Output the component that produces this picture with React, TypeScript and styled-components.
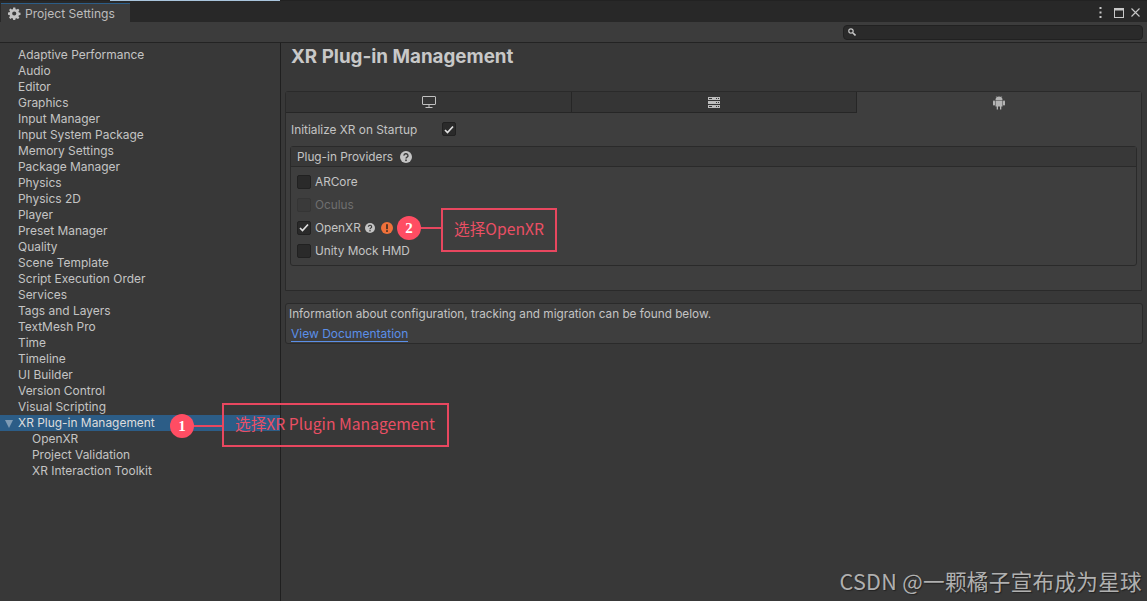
import styled, { createGlobalStyle } from "styled-components"

const Global = createGlobalStyle`
    html, body { margin: 0; padding: 0; background: #383838; }
    body { font-family: Inter, "Noto Sans", sans-serif; font-size: 11.8px; color: #c4c4c4; }
`

const Window = styled.div`
    position: relative;
    width: 1147px;
    height: 601px;
    overflow: hidden;
    display: flex;
    flex-direction: column;
    background: #383838;
`

const TopStrip = styled.div`
    height: 1px;
    flex: none;
    padding-left: 110px;
    background: #222222;
`
const StripSegment = styled.div`
    width: 170px;
    height: 1px;
    background: #a9c4dc;
`
const TitleBar = styled.div`
    height: 21px;
    box-sizing: border-box;
    padding-top: 2px;
    padding-left: 1px;
    background: #282828;
    display: flex;
    align-items: stretch;
    justify-content: space-between;
    flex: none;
`
const Tab = styled.div`
    width: 129px;
    box-sizing: border-box;
    background: #3c3c3c;
    border-top: 1px solid #2c5d87;
    display: flex;
    align-items: center;
    gap: 4px;
    padding-left: 7px;
    font-size: 12.1px;
    color: #bdbdbd;
`
const WindowButtons = styled.div`
    display: flex;
    align-items: center;
    gap: 7px;
    padding-right: 7px;
    color: #c8c8c8;
`
const Toolbar = styled.div`
    height: 21px;
    box-sizing: border-box;
    background: #3c3c3c;
    border-bottom: 1px solid #232323;
    display: flex;
    justify-content: flex-end;
    align-items: center;
    padding-right: 4px;
    flex: none;
`
const Search = styled.div`
    width: 300px;
    height: 15px;
    border-radius: 4px;
    background: #2a2a2a;
    border: 1px solid #212121;
    display: flex;
    align-items: center;
    padding-left: 4px;
    box-sizing: border-box;
`
const Body = styled.div`
    flex: 1;
    display: flex;
    min-height: 0;
`
const Sidebar = styled.div`
    width: 281px;
    box-sizing: border-box;
    border-right: 1px solid #1f1f1f;
    padding-top: 4px;
    flex: none;
    font-size: 11.95px;
`
const Item = styled.div<{ $child?: boolean; $selected?: boolean }>`
    position: relative;
    height: 16px;
    line-height: 16px;
    padding-left: ${(p) => (p.$child ? 32 : 18)}px;
    background: ${(p) => (p.$selected ? "#2c5d87" : "transparent")};
    color: ${(p) => (p.$selected ? "#dcdcdc" : "#c4c4c4")};
    white-space: nowrap;
`
const Arrow = styled.span`
    position: absolute;
    left: 5px;
    top: 5px;
    width: 0;
    height: 0;
    border-left: 4.5px solid transparent;
    border-right: 4.5px solid transparent;
    border-top: 8px solid #7f9cb5;
`
const Main = styled.div`
    flex: 1;
    padding: 0 4px 0 4px;
    min-width: 0;
`
const Heading = styled.h1`
    margin: 0;
    padding-left: 6px;
    height: 48px;
    line-height: 27px;
    font-size: 18.8px;
    font-weight: 700;
    color: #c8c8c8;
`
const TabPanel = styled.div`
    width: 857px;
    height: 200px;
    box-sizing: border-box;
    background: #3e3e3e;
    border: 1px solid #2a2a2a;
    border-radius: 3px 3px 0 0;
`
const TabRow = styled.div`
    display: grid;
    grid-template-columns: 286px 285px 1fr;
    height: 21px;
`
const PlatformTab = styled.div<{ $active?: boolean }>`
    display: flex;
    align-items: center;
    justify-content: center;
    background: ${(p) => (p.$active ? "#3e3e3e" : "#353535")};
    border-bottom: ${(p) => (p.$active ? "none" : "1px solid #262626")};
    border-right: ${(p) => (p.$active ? "none" : "1px solid #262626")};
    color: #bdbdbd;
`
const InitRow = styled.div`
    display: flex;
    align-items: center;
    height: 32px;
    padding-left: 5px;
`
const InitLabel = styled.span`
    width: 151px;
    padding-top: 1px;
    font-size: 11.85px;
`
const Check = styled.span<{ $disabled?: boolean }>`
    width: 14px;
    height: 14px;
    box-sizing: border-box;
    flex: none;
    border-radius: 2px;
    background: ${(p) => (p.$disabled ? "#3a3a3a" : "#2a2a2a")};
    border: 1px solid ${(p) => (p.$disabled ? "#353535" : "#212121")};
    display: inline-flex;
    align-items: center;
    justify-content: center;
    color: #e0e0e0;
`
const Providers = styled.div`
    margin: 1px 4px 0 4px;
    height: 120px;
    box-sizing: border-box;
    border: 1px solid #2a2a2a;
    border-radius: 3px;
`
const ProvidersHeader = styled.div`
    height: 20px;
    box-sizing: border-box;
    background: #383838;
    border-bottom: 1px solid #2a2a2a;
    display: flex;
    align-items: center;
    gap: 7px;
    padding-left: 6px;
`
const ProvidersBody = styled.div`
    padding: 3px 6px 0;
    display: flex;
    flex-direction: column;
`
const ProviderRow = styled.div<{ $disabled?: boolean }>`
    height: 23px;
    display: flex;
    align-items: center;
    gap: 4px;
    color: ${(p) => (p.$disabled ? "#6f6f6f" : "#c4c4c4")};
`
const InfoBox = styled.div`
    margin-top: 12px;
    width: 858px;
    height: 41px;
    box-sizing: border-box;
    background: #3e3e3e;
    border: 1px solid #2a2a2a;
    border-radius: 3px;
    padding: 1px 3px 0;
    line-height: 18px;
    font-size: 11.75px;
`
const DocLink = styled.a`
    display: inline-block;
    margin: 4px 0 0 2px;
    color: #5b8fe8;
    font-size: 12px;
    line-height: 14px;
    border-bottom: 1px solid #5b8fe8;
`
const Badge = styled.span`
    position: absolute;
    width: 24px;
    height: 24px;
    border-radius: 50%;
    background: #ff4d63;
    color: #fff;
    font-family: "Liberation Serif", serif;
    font-weight: 700;
    font-size: 15px;
    line-height: 24px;
    text-align: center;
`
const Leader = styled.span`
    position: absolute;
    height: 2px;
    background: #e8475f;
`
const Callout = styled.div`
    position: absolute;
    box-sizing: border-box;
    border: 2px solid #e8475f;
    color: #ea4f64;
    font-family: "Noto Sans CJK SC", sans-serif;
    font-size: 15.7px;
    display: flex;
    align-items: center;
    padding: 0 0 3px 11px;
    white-space: nowrap;
`
const Watermark = styled.div`
    position: absolute;
    right: 5px;
    top: 566px;
    font-family: "Noto Sans CJK SC", sans-serif;
    font-size: 21.6px;
    letter-spacing: 0.3px;
    line-height: 30px;
    color: #b0b0b0;
    text-shadow: 1px 1px 1px #222;
    white-space: nowrap;
`

const Gear = () => (
    <svg width="13" height="13" viewBox="0 0 24 24" fill="#c4c4c4">
        <path fillRule="evenodd" d="M10 1h4l.6 3.2 2 .8L19.3 3.200 22 6l-1.900 2.700.9 2 3 .5v4l-3.100.6-.8 2 1.800 2.700-2.800 2.800-2.700-1.800-2 .8L14 25h-4l-.6-3.100-2-.8-2.700 1.800L2 20l1.800-2.700-.8-2L0 14.700v-4l3-.5.9-2L2 5.600 4.700 3l2.700 1.900 2-.8zM12 8.500a4 4 0 1 0 0 8 4 4 0 0 0 0-8z" transform="scale(.96)" />
    </svg>
)
const Dots = () => (
    <svg width="8" height="11" viewBox="0 0 8 11" fill="currentColor">
        <rect x="0.500" y="0" width="2" height="2" />
        <rect x="0.500" y="4.500" width="2" height="2" />
        <rect x="0.500" y="9" width="2" height="2" />
    </svg>
)
const Maximize = () => (
    <svg width="10" height="10" viewBox="0 0 10 10" fill="none" stroke="currentColor">
        <rect x="0.500" y="0.500" width="9" height="9" />
        <rect x="0" y="0" width="10" height="2.500" fill="currentColor" stroke="none" />
    </svg>
)
const Close = () => (
    <svg width="9" height="9" viewBox="0 0 9 9" stroke="currentColor" strokeWidth="1.100">
        <path d="M.5.5l8 8M8.500.5l-8 8" />
    </svg>
)
const Magnifier = () => (
    <svg width="8" height="8" viewBox="0 0 8 8" fill="none" stroke="#c8c8c8" strokeWidth="1.200">
        <circle cx="3" cy="3" r="2.200" />
        <path d="M4.700 4.700L7.500 7.500" strokeWidth="1.600" />
    </svg>
)
const Monitor = () => (
    <svg width="14" height="12" viewBox="0 0 14 12" fill="none" stroke="#c0c0c0">
        <rect x="0.500" y="0.500" width="13" height="8" rx="0.500" />
        <path d="M7 9v2M3.500 11.500h7" />
    </svg>
)
const ServerIcon = () => (
    <svg width="12" height="11" viewBox="0 0 12 11" fill="#bdbdbd">
        <path fillRule="evenodd" d="M0 0h12v3H0zM8 1v1h1V1zM10 1v1h1V1zM0 4h12v3H0zM8 5v1h1V5zM10 5v1h1V5zM0 8h12v3H0zM8 9v1h1V9zM10 9v1h1V9zM1 1v1h3V1zM1 9v1h3V9z" />
    </svg>
)
const Android = () => (
    <svg width="12" height="14" viewBox="0 0 12 14" fill="#b4b4b4">
        <path d="M2.500 4a3.500 3.500 0 0 1 7 0z" />
        <path d="M2.500 4.600h7v6h-1.200V13.500H7V10.600H5V13.500H3.700V10.600H2.500z" />
        <rect x="0" y="4.600" width="2" height="5" rx="0.800" />
        <rect x="10" y="4.600" width="2" height="5" rx="0.800" />
        <path d="M3.200.3l1 1.500M8.800.3l-1 1.500" stroke="#b4b4b4" strokeWidth="0.600" />
    </svg>
)
const Tick = () => (
    <svg width="10" height="9" viewBox="0 0 10 9" fill="none" stroke="currentColor" strokeWidth="1.700">
        <path d="M1 5l2.500 2.500L9 1.500" />
    </svg>
)
const Help = ({ size }: { size: number }) => (
    <svg width={size} height={size} viewBox="0 0 12 12">
        <circle cx="6" cy="6" r="6" fill="#c4c4c4" />
        <path d="M4 4.600a2 1.800 0 1 1 3 1.500c-.7.400-1 .7-1 1.400" fill="none" stroke="#3a3a3a" strokeWidth="1.400" />
        <rect x="5.200" y="8.500" width="1.600" height="1.600" fill="#3a3a3a" />
    </svg>
)
const Warn = () => (
    <svg width="14" height="12" viewBox="-2 0 14 12">
        <circle cx="6" cy="6" r="6" fill="#f0713a" />
        <rect x="5.200" y="2.200" width="1.600" height="5" fill="#3a2a22" />
        <rect x="5.200" y="8.200" width="1.600" height="1.700" fill="#3a2a22" />
    </svg>
)

const topItems = [
    "Adaptive Performance", "Audio", "Editor", "Graphics", "Input Manager", "Input System Package",
    "Memory Settings", "Package Manager", "Physics", "Physics 2D", "Player", "Preset Manager", "Quality",
    "Scene Template", "Script Execution Order", "Services", "Tags and Layers", "TextMesh Pro", "Time",
    "Timeline", "UI Builder", "Version Control", "Visual Scripting",
]
const childItems = ["OpenXR", "Project Validation", "XR Interaction Toolkit"]

export default function App() {
    return (
        <Window>
            <Global />
            <TopStrip><StripSegment /></TopStrip>
            <TitleBar>
                <Tab><Gear />Project Settings</Tab>
                <WindowButtons><Dots /><Maximize /><Close /></WindowButtons>
            </TitleBar>
            <Toolbar>
                <Search><Magnifier /></Search>
            </Toolbar>
            <Body>
                <Sidebar>
                    {topItems.map((name) => <Item key={name}>{name}</Item>)}
                    <Item $selected><Arrow />XR Plug-in Management</Item>
                    {childItems.map((name) => <Item key={name} $child>{name}</Item>)}
                </Sidebar>
                <Main>
                    <Heading>XR Plug-in Management</Heading>
                    <TabPanel>
                        <TabRow>
                            <PlatformTab><Monitor /></PlatformTab>
                            <PlatformTab><ServerIcon /></PlatformTab>
                            <PlatformTab $active><Android /></PlatformTab>
                        </TabRow>
                        <InitRow>
                            <InitLabel>Initialize XR on Startup</InitLabel>
                            <Check><Tick /></Check>
                        </InitRow>
                        <Providers>
                            <ProvidersHeader>Plug-in Providers <Help size={12} /></ProvidersHeader>
                            <ProvidersBody>
                                <ProviderRow><Check /><span>ARCore</span></ProviderRow>
                                <ProviderRow $disabled><Check $disabled /><span>Oculus</span></ProviderRow>
                                <ProviderRow>
                                    <Check><Tick /></Check>
                                    <span>OpenXR</span>
                                    <Help size={10} />
                                    <Warn />
                                </ProviderRow>
                                <ProviderRow><Check /><span>Unity Mock HMD</span></ProviderRow>
                            </ProvidersBody>
                        </Providers>
                    </TabPanel>
                    <InfoBox>
                        Information about configuration, tracking and migration can be found below.
                        <br />
                        <DocLink>View Documentation</DocLink>
                    </InfoBox>
                </Main>
            </Body>

            <Leader style={{ left: 190, top: 425, width: 34 }} />
            <Badge style={{ left: 170, top: 414 }}>1</Badge>
            <Callout style={{ left: 222, top: 403, width: 227, height: 44 }}>选择XR Plugin Management</Callout>

            <Leader style={{ left: 415, top: 227, width: 28 }} />
            <Badge style={{ left: 397, top: 216 }}>2</Badge>
            <Callout style={{ left: 441, top: 208, width: 116, height: 44 }}>选择OpenXR</Callout>

            <Watermark>CSDN @一颗橘子宣布成为星球</Watermark>
        </Window>
    )
}
